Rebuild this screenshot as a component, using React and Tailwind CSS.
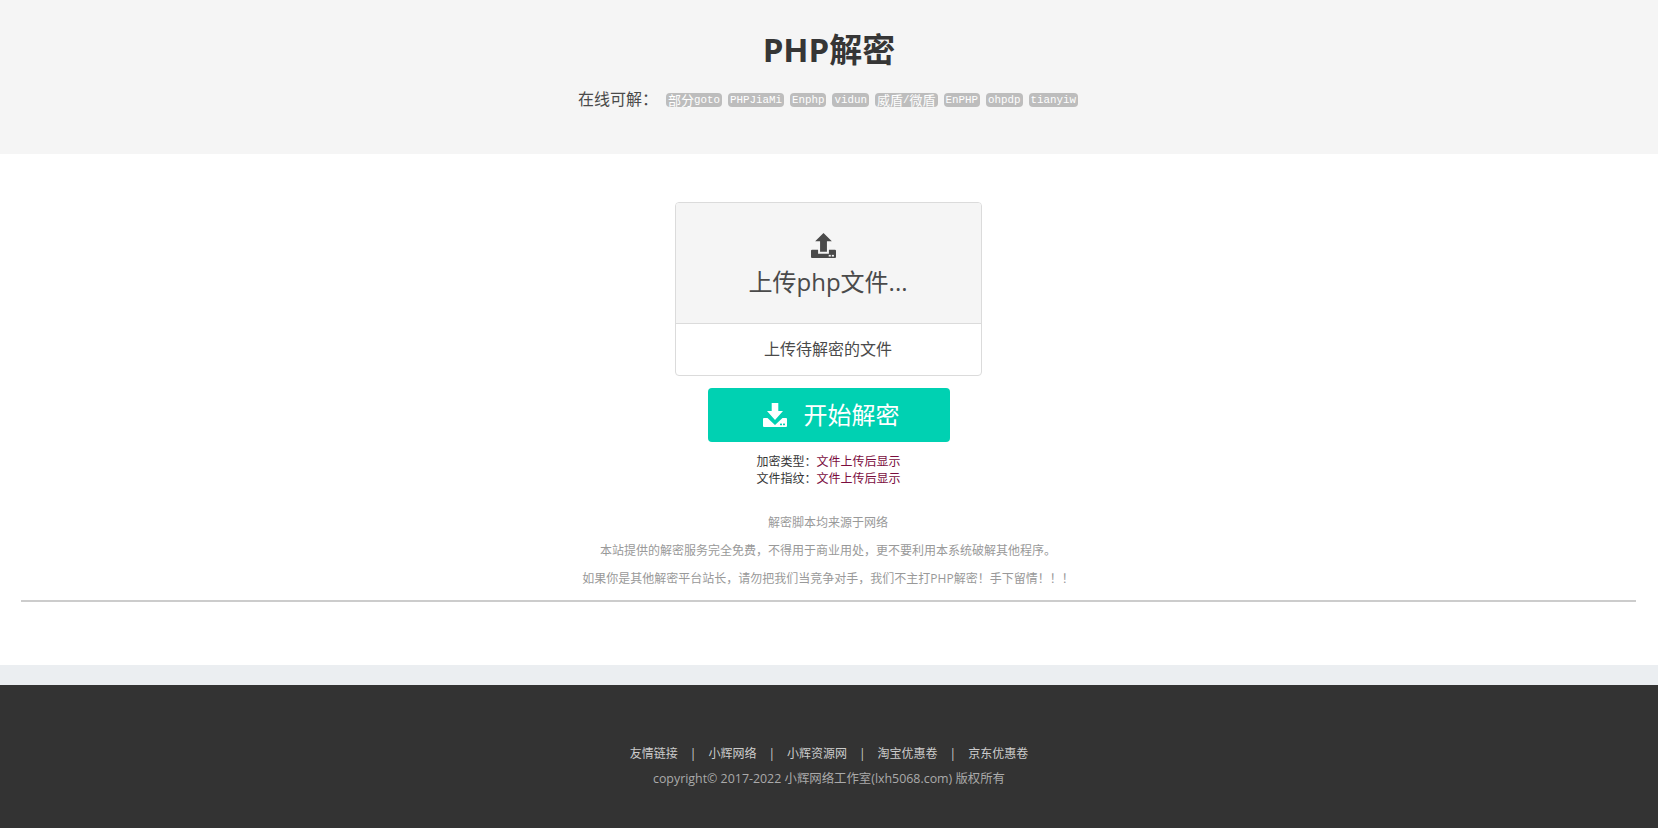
import React from 'react';

const FONT = 'font-["Open_Sans","Noto_Sans_CJK_SC",sans-serif]';

const BADGES = [
  [['部分', true], ['goto', false]],
  [['PHPJiaMi', false]],
  [['Enphp', false]],
  [['vidun', false]],
  [['威盾', true], ['/', false], ['微盾', true]],
  [['EnPHP', false]],
  [['ohpdp', false]],
  [['tianyiw', false]],
];

const NOTES = [
  '解密脚本均来源于网络',
  '本站提供的解密服务完全免费，不得用于商业用处，更不要利用本系统破解其他程序。',
  '如果你是其他解密平台站长，请勿把我们当竞争对手，我们不主打PHP解密！手下留情！！！',
];

const LINKS = ['友情链接', '小辉网络', '小辉资源网', '淘宝优惠卷', '京东优惠卷'];

// tray with an arrow going up
const UploadIcon = () => (
  <svg width="25" height="25" viewBox="0 0 24 24" className="block">
    <path d="M12 0 L20 8 L15.3 8 L15.3 18 L8.7 18 L8.7 8 L4 8 Z" fill="currentColor" />
    <path
      d="M1 16 L6.8 16 L6.8 20 L17.2 20 L17.2 16 L23 16 Q24 16 24 17 L24 23 Q24 24 23 24 L1 24 Q0 24 0 23 L0 17 Q0 16 1 16 Z"
      fill="currentColor"
    />
    <rect x="17" y="21" width="2" height="1.6" fill="#f5f5f5" />
    <rect x="20" y="21" width="2" height="1.6" fill="#f5f5f5" />
  </svg>
);

// tray with an arrow going down
const DownloadIcon = () => (
  <svg width="24" height="24" viewBox="0 0 24 24" className="block">
    <path d="M8.7 0 L15.3 0 L15.3 8 L20 8 L12 17 L4 8 L8.7 8 Z" fill="currentColor" />
    <path
      d="M1 15 L4.5 15 L12 22 L19.5 15 L23 15 Q24 15 24 16 L24 23 Q24 24 23 24 L1 24 Q0 24 0 23 L0 16 Q0 15 1 15 Z"
      fill="currentColor"
    />
    <rect x="17" y="20.6" width="2" height="1.6" fill="#00d1b2" />
    <rect x="20" y="20.6" width="2" height="1.6" fill="#00d1b2" />
  </svg>
);

const Badge = ({ parts }) => (
  <span className="mt-[2px] flex h-[14px] items-center rounded-[4px] bg-[#bdbdbd] px-[2px] leading-[14px] text-white">
    {parts.map(([text, cjk], i) => (
      <span
        key={i}
        className={cjk ? 'font-["Noto_Sans_CJK_SC",serif] text-[13px]' : 'font-["Liberation_Mono",monospace] text-[10.83px]'}
      >
        {text}
      </span>
    ))}
  </span>
);

export default function App() {
  return (
    <div className={`${FONT} min-h-[828px] bg-[#ebeef1] text-[#4a4a4a]`}>
      {/* header */}
      <header className="h-[154px] bg-[#f5f5f5] pt-[30px] text-center">
        <h1 className="text-[33px] font-bold leading-[40px] text-[#363636]">PHP解密</h1>
        <div className="mt-[17px] mr-[2px] flex h-[24px] items-center justify-center gap-[6px]">
          <span className="mr-[2px] text-[16px]">在线可解：</span>
          {BADGES.map((parts, i) => (
            <Badge key={i} parts={parts} />
          ))}
        </div>
      </header>

      {/* main */}
      <main className="flex h-[511px] flex-col items-center bg-white pl-[21px] pr-[22px] pt-[48px]">
        <div className="mr-[1px] w-[307px] overflow-hidden rounded-[4px] border border-[#dbdbdb]">
          <div className="flex h-[121px] flex-col items-center border-b border-[#dbdbdb] bg-[#f5f5f5] pt-[30px] text-[#4a4a4a]">
            <span className="mr-[10px]">
              <UploadIcon />
            </span>
            <span className="mt-[6px] text-[24px] leading-[36px]">上传php文件...</span>
          </div>
          <div className="flex h-[51px] items-center justify-center pb-[2px] text-[16px]">上传待解密的文件</div>
        </div>

        <button className="mt-[12px] flex h-[54px] w-[242px] items-center justify-center gap-[17px] rounded-[4px] bg-[#00d1b2] pl-[5px] text-[24px] text-white">
          <DownloadIcon />
          <span>开始解密</span>
        </button>

        <div className="mt-[11px] text-center text-[12px] leading-[17px] text-[#363636]">
          <p>加密类型：<span className="text-[#7a0c3e]">文件上传后显示</span></p>
          <p>文件指纹：<span className="text-[#7a0c3e]">文件上传后显示</span></p>
        </div>

        <div className="mt-[22px] mr-[1px] text-center text-[12px] leading-[28px] text-[#999999]">
          {NOTES.map((note) => (
            <p key={note}>{note}</p>
          ))}
        </div>

        <hr className="mt-[7px] h-[2px] w-full border-0 bg-[#cccccc]" />
      </main>

      {/* footer */}
      <footer className="mt-[20px] h-[143px] bg-[#333333] pt-[58px] text-center">
        <div className="flex h-[22px] items-center justify-center gap-[12px] text-[12px] text-[#cccccc]">
          {LINKS.map((link, i) => (
            <React.Fragment key={link}>
              {i > 0 && <span>|</span>}
              <span>{link}</span>
            </React.Fragment>
          ))}
        </div>
        <p className="mt-[3px] text-[12.4px] leading-[22px] text-[#aaaaaa]">copyright© 2017-2022 小辉网络工作室(lxh5068.com) 版权所有</p>
      </footer>
    </div>
  );
}
